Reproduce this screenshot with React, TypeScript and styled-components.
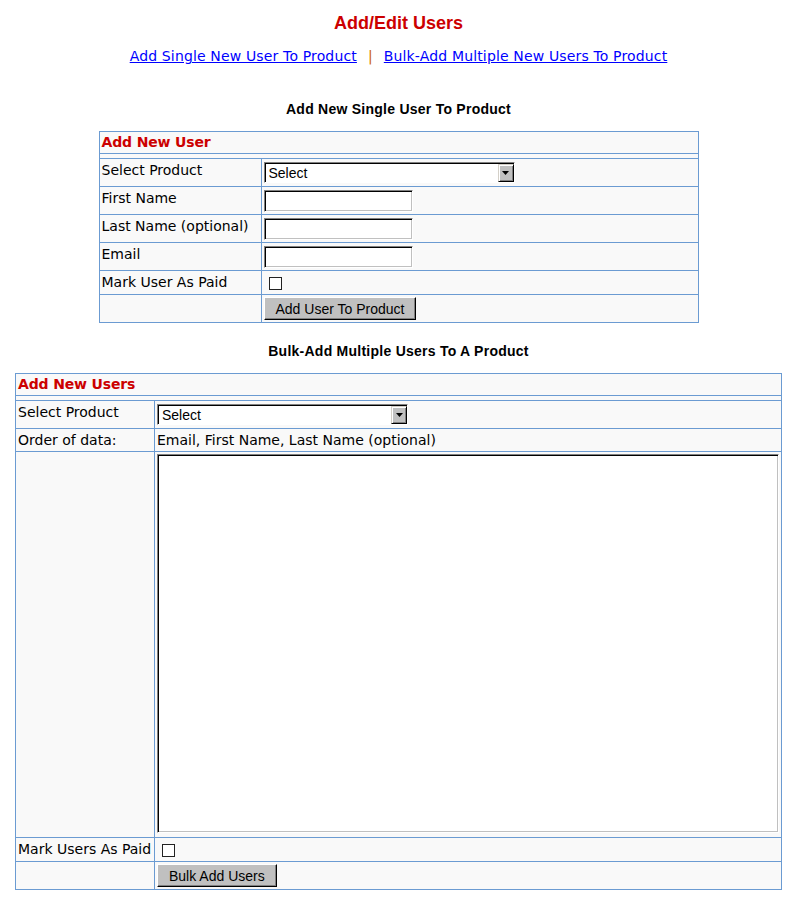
import React from "react";
import styled, { createGlobalStyle } from "styled-components";

const GlobalStyle = createGlobalStyle`
  html, body { margin: 0; padding: 0; background: #ffffff; }
  body {
    font-family: "DejaVu Sans", Verdana, sans-serif;
    font-size: 14px;
    color: #000000;
  }
`;

const BLUE_LINE = "#6b9bd2";

const Page = styled.div`
  display: flex;
  flex-direction: column;
  align-items: center;
  width: 100%;
`;

const Title = styled.h1`
  margin: 12px 0 0;
  font: bold 18px/22px "Liberation Sans", Arial, sans-serif;
  color: #cc0000;
`;

const LinkBar = styled.div`
  margin-top: 14px;
  font-size: 14px;
  line-height: 17px;
  white-space: nowrap;
  letter-spacing: 0.15px;
`;

const NavLink = styled.a`
  color: #0000ff;
  text-decoration: underline;
`;

const Separator = styled.span`
  color: #cc6600;
  margin: 0 11px;
`;

const Section = styled.section<{ $top: number; $gap: number }>`
  display: flex;
  flex-direction: column;
  align-items: center;
  margin-top: ${(p) => p.$top}px;
  gap: ${(p) => p.$gap}px;
`;

const SectionHeading = styled.h2`
  margin: 0;
  font: bold 14px/17px "Liberation Sans", Arial, sans-serif;
  letter-spacing: 0.25px;
`;

const Panel = styled.div<{ $width: number; $labelW: number }>`
  --label-w: ${(p) => p.$labelW}px;
  width: ${(p) => p.$width}px;
  box-sizing: border-box;
  border: 1px solid ${BLUE_LINE};
  background: #f9f9f9;
  display: flex;
  flex-direction: column;
`;

const PanelHeader = styled.div`
  padding: 2px;
  line-height: 17px;
  font-weight: bold;
  color: #cc0000;
  letter-spacing: -0.15px;
`;

const Spacer = styled.div`
  height: 4px;
  border-top: 1px solid ${BLUE_LINE};
`;

const Row = styled.div`
  display: grid;
  grid-template-columns: var(--label-w) 1fr;
  border-top: 1px solid ${BLUE_LINE};
`;

const Label = styled.div`
  box-sizing: border-box;
  border-right: 1px solid ${BLUE_LINE};
  padding: 3px 2px 2px;
  line-height: 17px;
  white-space: nowrap;
`;

const Value = styled.div`
  display: flex;
  align-items: flex-start;
  padding: 2px;
  line-height: 17px;
  min-width: 0;
`;

const ValueText = styled.div`
  padding: 3px 2px 2px;
  line-height: 17px;
  white-space: nowrap;
`;

const SelectFrame = styled.div`
  display: flex;
  width: 251px;
  height: 21px;
  margin: 1px 0 1px;
  box-sizing: border-box;
  border: 1px solid;
  border-color: #808080 #ffffff #ffffff #808080;
  box-shadow: inset 1px 1px 0 #000000;
  padding: 1px 0 0 1px;
  background: #ffffff;
`;

const NativeSelect = styled.select`
  flex: 1;
  min-width: 0;
  appearance: none;
  -webkit-appearance: none;
  border: 0;
  outline: none;
  background: transparent;
  padding: 0 0 0 3px;
  margin: 0;
  height: 100%;
  font: 14px "Liberation Sans", Arial, sans-serif;
  color: #000000;
`;

const ArrowButton = styled.span`
  width: 16px;
  height: 100%;
  box-sizing: border-box;
  display: flex;
  align-items: center;
  justify-content: center;
  background: #c0c0c0;
  border: 1px solid;
  border-color: #d4d0c8 #000000 #000000 #d4d0c8;
  box-shadow: inset 1px 1px 0 #ffffff, inset -1px -1px 0 #808080;
`;

const TextInput = styled.input`
  width: 149px;
  height: 22px;
  margin: 1px 0 0;
  box-sizing: border-box;
  border: 1px solid;
  border-color: #808080 #ffffff #ffffff #808080;
  box-shadow: inset 1px 1px 0 #000000, inset -1px -1px 0 #c0c0c0;
  padding: 1px 3px;
  background: #ffffff;
  font: 14px "Liberation Sans", Arial, sans-serif;
  outline: none;
`;

const Checkbox = styled.input`
  appearance: none;
  -webkit-appearance: none;
  width: 13px;
  height: 13px;
  margin: 4px 0 2px 5px;
  box-sizing: border-box;
  border: 1px solid #222222;
  background: #ffffff;
`;

const Button = styled.button`
  height: 23px;
  margin: 0;
  padding: 0 11px;
  box-sizing: border-box;
  background: #c0c0c0;
  border: 1px solid;
  border-color: #ffffff #000000 #000000 #ffffff;
  box-shadow: inset -1px -1px 0 #808080;
  font: 14px "Liberation Sans", Arial, sans-serif;
  color: #000000;
  white-space: nowrap;
`;

const BulkArea = styled.textarea`
  display: block;
  width: 622px;
  height: 379px;
  margin: 0 0 2px;
  box-sizing: border-box;
  border: 1px solid;
  border-color: #808080 #ffffff #ffffff #808080;
  box-shadow: inset 1px 1px 0 #000000, inset -1px -1px 0 #c0c0c0;
  background: #ffffff;
  resize: none;
  outline: none;
  padding: 2px;
  font: 14px "Liberation Mono", monospace;
`;

const ProductSelect: React.FC = () => (
  <SelectFrame>
    <NativeSelect defaultValue="">
      <option value="">Select</option>
    </NativeSelect>
    <ArrowButton>
      <svg width="7" height="4" viewBox="0 0 7 4">
        <path d="M0 0h7L3.5 4z" fill="#000" />
      </svg>
    </ArrowButton>
  </SelectFrame>
);

export default function App() {
  return (
    <>
      <GlobalStyle />
      <Page>
        <Title>Add/Edit Users</Title>
        <LinkBar>
          <NavLink href="#single">Add Single New User To Product</NavLink>
          <Separator>|</Separator>
          <NavLink href="#bulk">Bulk-Add Multiple New Users To Product</NavLink>
        </LinkBar>

        <Section id="single" $top={36} $gap={13}>
          <SectionHeading>Add New Single User To Product</SectionHeading>
          <Panel $width={600} $labelW={162}>
            <PanelHeader>Add New User</PanelHeader>
            <Spacer />
            <Row>
              <Label>Select Product</Label>
              <Value>
                <ProductSelect />
              </Value>
            </Row>
            <Row>
              <Label>First Name</Label>
              <Value>
                <TextInput type="text" />
              </Value>
            </Row>
            <Row>
              <Label>Last Name (optional)</Label>
              <Value>
                <TextInput type="text" />
              </Value>
            </Row>
            <Row>
              <Label>Email</Label>
              <Value>
                <TextInput type="text" />
              </Value>
            </Row>
            <Row>
              <Label>Mark User As Paid</Label>
              <Value>
                <Checkbox type="checkbox" />
              </Value>
            </Row>
            <Row>
              <Label />
              <Value>
                <Button type="button">Add User To Product</Button>
              </Value>
            </Row>
          </Panel>
        </Section>

        <Section id="bulk" $top={20} $gap={13}>
          <SectionHeading>Bulk-Add Multiple Users To A Product</SectionHeading>
          <Panel $width={767} $labelW={139}>
            <PanelHeader>Add New Users</PanelHeader>
            <Spacer />
            <Row>
              <Label>Select Product</Label>
              <Value>
                <ProductSelect />
              </Value>
            </Row>
            <Row>
              <Label>Order of data:</Label>
              <ValueText>Email, First Name, Last Name (optional)</ValueText>
            </Row>
            <Row>
              <Label />
              <Value>
                <BulkArea />
              </Value>
            </Row>
            <Row>
              <Label>Mark Users As Paid</Label>
              <Value>
                <Checkbox type="checkbox" />
              </Value>
            </Row>
            <Row>
              <Label />
              <Value>
                <Button type="button">Bulk Add Users</Button>
              </Value>
            </Row>
          </Panel>
        </Section>
      </Page>
    </>
  );
}
